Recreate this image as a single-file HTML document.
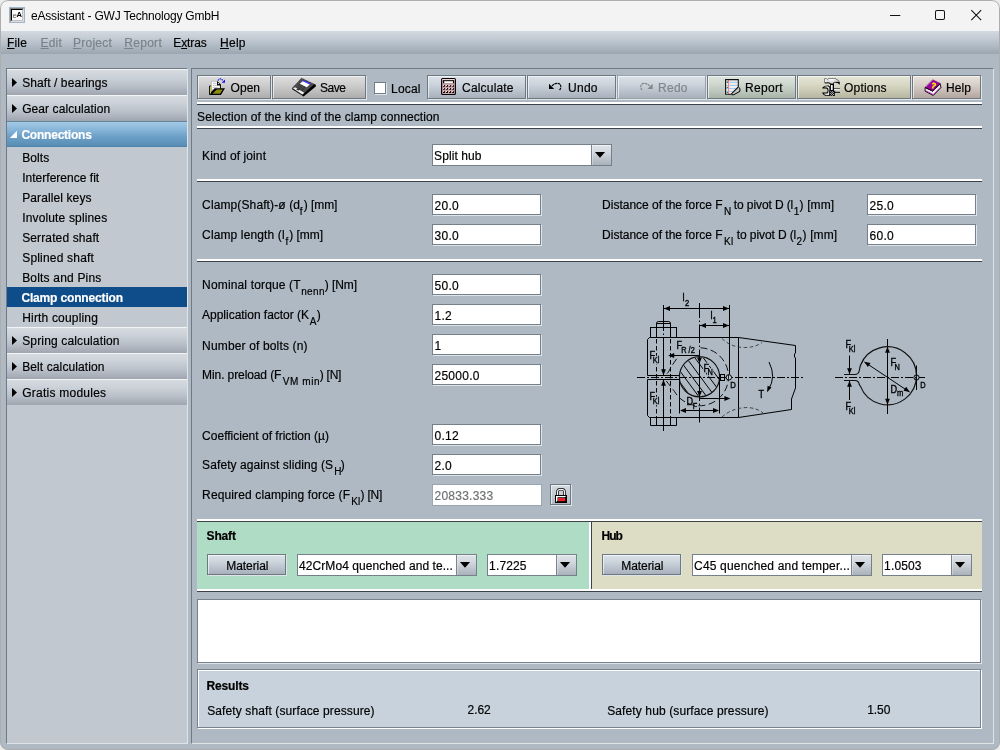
<!DOCTYPE html>
<html><head><meta charset="utf-8"><title>eAssistant - GWJ Technology GmbH</title>
<style>
html,body{margin:0;padding:0;background:#ececec;overflow:hidden;width:1000px;height:750px;}
#win{will-change:transform;position:relative;width:1000px;height:750px;overflow:hidden;background:#aeb9c4;border-radius:8px;font-family:"Liberation Sans", sans-serif;}
#frame{position:absolute;left:0;top:0;width:1000px;height:750px;box-sizing:border-box;border:1px solid #adadad;border-radius:8px;pointer-events:none;}
.t{position:absolute;white-space:pre;font-family:"Liberation Sans", sans-serif;-webkit-text-stroke:0.18px currentColor;}
u{text-decoration:underline;text-underline-offset:1px;}
</style></head><body><div id="win">
<div style="position:absolute;left:0px;top:0px;width:1000px;height:31px;background:#f3f3f3;"></div><div style="position:absolute;left:9px;top:7px;width:16px;height:16px;background:#dedede;border:1px solid #a4b3c5;box-sizing:border-box;"></div><div style="position:absolute;left:10px;top:8px;width:14px;height:14px;border-top:1px solid #7f7f7f;border-left:1px solid #7f7f7f;border-right:1px solid #dedede;border-bottom:1px solid #dedede;box-sizing:border-box;"></div><div style="position:absolute;left:11px;top:9px;width:12px;height:12px;background:#fff;border-top:1px solid #000;border-left:1px solid #000;border-right:1px solid #c0c0c0;border-bottom:1px solid #c0c0c0;box-sizing:border-box;"></div><span class="t" style="left:12.6px;top:10.6px;font-size:8px;line-height:9px;color:#555;-webkit-text-stroke:0">e</span><span class="t" style="left:16.4px;top:11.2px;font-size:7.6px;line-height:8px;font-weight:bold;color:#000;-webkit-text-stroke:0">A</span><span class="t" style="left:31.00px;top:9.00px;font-size:12px;line-height:14px;color:#000;letter-spacing:-0.197px;-webkit-text-stroke:0;">eAssistant - GWJ Technology GmbH</span><svg style="position:absolute;left:880px;top:0" width="120" height="31" viewBox="880 0 120 31"><g fill="none" stroke="#111" stroke-width="1.05"><path d="M890 15.5H900.3"/><rect x="935.5" y="10.5" width="9" height="9" rx="1.5"/><path d="M971.3 10.2L981.2 20.1M981.2 10.2L971.3 20.1"/></g></svg><div style="position:absolute;left:0px;top:31px;width:1000px;height:23px;background:linear-gradient(#d3d9e0 0%,#c4ccd5 30%,#b3bdc7 60%,#9ca6b1 100%);"></div><span class="t" style="left:7.05px;top:36.00px;font-size:12px;line-height:14px;color:#000;letter-spacing:0.152px;"><u>F</u>ile</span><span class="t" style="left:40.55px;top:36.00px;font-size:12px;line-height:14px;color:#7a828b;letter-spacing:0.171px;"><u>E</u>dit</span><span class="t" style="left:73.05px;top:36.00px;font-size:12px;line-height:14px;color:#7a828b;letter-spacing:0.223px;"><u>P</u>roject</span><span class="t" style="left:124.25px;top:36.00px;font-size:12px;line-height:14px;color:#7a828b;letter-spacing:0.294px;"><u>R</u>eport</span><span class="t" style="left:173.25px;top:36.00px;font-size:12px;line-height:14px;color:#000;letter-spacing:-0.103px;">E<u>x</u>tras</span><span class="t" style="left:220.05px;top:36.00px;font-size:12px;line-height:14px;color:#000;letter-spacing:0.271px;"><u>H</u>elp</span><div style="position:absolute;left:6px;top:68px;width:182px;height:676px;background:#c1c8d0;border-left:1px solid #707a84;border-top:1px solid #707a84;border-right:1px solid #dfe4e9;border-bottom:1px solid #dfe4e9;box-sizing:border-box;"></div><div style="position:absolute;left:7px;top:69px;width:180px;height:26px;background:linear-gradient(#d6dbe0 0%,#cbd1d8 30%,#b8bfc8 65%,#9fa6af 100%);border-top:1px solid #f2f4f6;box-sizing:border-box;"></div><svg style="position:absolute;left:11px;top:77px" width="7" height="11"><path d="M1 1L6 5.5L1 10Z" fill="#000"/></svg><span class="t" style="left:22.20px;top:76.00px;font-size:12px;line-height:14px;color:#000;letter-spacing:0.083px;">Shaft / bearings</span><div style="position:absolute;left:7px;top:95px;width:180px;height:26px;background:linear-gradient(#d6dbe0 0%,#cbd1d8 30%,#b8bfc8 65%,#9fa6af 100%);border-top:1px solid #f2f4f6;box-sizing:border-box;"></div><svg style="position:absolute;left:11px;top:103px" width="7" height="11"><path d="M1 1L6 5.5L1 10Z" fill="#000"/></svg><span class="t" style="left:22.20px;top:102.00px;font-size:12px;line-height:14px;color:#000;letter-spacing:0.079px;">Gear calculation</span><div style="position:absolute;left:7px;top:121px;width:180px;height:26px;background:linear-gradient(#a4cae6 0%,#88b6d9 30%,#6b9fc7 60%,#5a8fb6 92%,#4f82a9 100%);border-top:1px solid #64849a;box-sizing:border-box;"></div><svg style="position:absolute;left:9px;top:130px" width="9" height="9"><path d="M0.8 8L8 8L8 0.8Z" fill="#fff"/></svg><span class="t" style="left:21.40px;top:128.00px;font-size:12px;line-height:14px;color:#fff;font-weight:bold;letter-spacing:-0.217px;">Connections</span><span class="t" style="left:22.20px;top:151.00px;font-size:12px;line-height:14px;color:#000;letter-spacing:0.103px;">Bolts</span><span class="t" style="left:22.20px;top:171.00px;font-size:12px;line-height:14px;color:#000;letter-spacing:0.019px;">Interference fit</span><span class="t" style="left:22.20px;top:191.00px;font-size:12px;line-height:14px;color:#000;letter-spacing:0.106px;">Parallel keys</span><span class="t" style="left:22.20px;top:211.00px;font-size:12px;line-height:14px;color:#000;letter-spacing:0.152px;">Involute splines</span><span class="t" style="left:22.20px;top:231.00px;font-size:12px;line-height:14px;color:#000;letter-spacing:0.125px;">Serrated shaft</span><span class="t" style="left:22.20px;top:251.00px;font-size:12px;line-height:14px;color:#000;letter-spacing:0.192px;">Splined shaft</span><span class="t" style="left:22.20px;top:271.00px;font-size:12px;line-height:14px;color:#000;letter-spacing:0.183px;">Bolts and Pins</span><div style="position:absolute;left:7px;top:287px;width:180px;height:20px;background:#0f4c8a;"></div><span class="t" style="left:21.40px;top:291.00px;font-size:12px;line-height:14px;color:#fff;font-weight:bold;letter-spacing:-0.154px;">Clamp connection</span><span class="t" style="left:22.20px;top:311.00px;font-size:12px;line-height:14px;color:#000;letter-spacing:0.179px;">Hirth coupling</span><div style="position:absolute;left:7px;top:327px;width:180px;height:26px;background:linear-gradient(#d6dbe0 0%,#cbd1d8 30%,#b8bfc8 65%,#9fa6af 100%);border-top:1px solid #f2f4f6;box-sizing:border-box;"></div><svg style="position:absolute;left:11px;top:335px" width="7" height="11"><path d="M1 1L6 5.5L1 10Z" fill="#000"/></svg><span class="t" style="left:22.20px;top:334.00px;font-size:12px;line-height:14px;color:#000;letter-spacing:0.151px;">Spring calculation</span><div style="position:absolute;left:7px;top:353px;width:180px;height:26px;background:linear-gradient(#d6dbe0 0%,#cbd1d8 30%,#b8bfc8 65%,#9fa6af 100%);border-top:1px solid #f2f4f6;box-sizing:border-box;"></div><svg style="position:absolute;left:11px;top:361px" width="7" height="11"><path d="M1 1L6 5.5L1 10Z" fill="#000"/></svg><span class="t" style="left:22.20px;top:360.00px;font-size:12px;line-height:14px;color:#000;letter-spacing:0.105px;">Belt calculation</span><div style="position:absolute;left:7px;top:379px;width:180px;height:26px;background:linear-gradient(#d6dbe0 0%,#cbd1d8 30%,#b8bfc8 65%,#9fa6af 100%);border-top:1px solid #f2f4f6;box-sizing:border-box;"></div><svg style="position:absolute;left:11px;top:387px" width="7" height="11"><path d="M1 1L6 5.5L1 10Z" fill="#000"/></svg><span class="t" style="left:22.20px;top:386.00px;font-size:12px;line-height:14px;color:#000;letter-spacing:0.246px;">Gratis modules</span><div style="position:absolute;left:191px;top:68px;width:803px;height:676px;border-left:1px solid #707a84;border-top:1px solid #707a84;border-right:1px solid #dfe4e9;border-bottom:1px solid #dfe4e9;box-sizing:border-box;"></div><div style="position:absolute;left:197px;top:75px;width:74px;height:24px;background:linear-gradient(#dedede 0%,#d0d0d0 35%,#bdbdbd 70%,#adadad 100%);border:1px solid #6e7881;box-sizing:border-box;box-shadow:1px 1px 0 #dfe4e9, inset 1px 1px 0 rgba(255,255,255,0.6);"></div><div style="position:absolute;left:272px;top:75px;width:94px;height:24px;background:linear-gradient(#dedede 0%,#d0d0d0 35%,#bdbdbd 70%,#adadad 100%);border:1px solid #6e7881;box-sizing:border-box;box-shadow:1px 1px 0 #dfe4e9, inset 1px 1px 0 rgba(255,255,255,0.6);"></div><div style="position:absolute;left:427px;top:75px;width:99px;height:24px;background:linear-gradient(#dbe1e8 0%,#cdd5dd 35%,#b9c2cc 70%,#a7b0bb 100%);border:1px solid #6e7881;box-sizing:border-box;box-shadow:1px 1px 0 #dfe4e9, inset 1px 1px 0 rgba(255,255,255,0.6);"></div><div style="position:absolute;left:527px;top:75px;width:89px;height:24px;background:linear-gradient(#dbe1e8 0%,#cdd5dd 35%,#b9c2cc 70%,#a7b0bb 100%);border:1px solid #6e7881;box-sizing:border-box;box-shadow:1px 1px 0 #dfe4e9, inset 1px 1px 0 rgba(255,255,255,0.6);"></div><div style="position:absolute;left:617px;top:75px;width:89px;height:24px;background:linear-gradient(#dbe1e8 0%,#cdd5dd 35%,#b9c2cc 70%,#a7b0bb 100%);border:1px solid #98a2ac;box-sizing:border-box;box-shadow:1px 1px 0 #dfe4e9, inset 1px 1px 0 rgba(255,255,255,0.6);"></div><div style="position:absolute;left:707px;top:75px;width:89px;height:24px;background:linear-gradient(#dee4de 0%,#d0d8d0 35%,#bcc6bc 70%,#a9b4a9 100%);border:1px solid #6e7881;box-sizing:border-box;box-shadow:1px 1px 0 #dfe4e9, inset 1px 1px 0 rgba(255,255,255,0.6);"></div><div style="position:absolute;left:797px;top:75px;width:114px;height:24px;background:linear-gradient(#e6e6d8 0%,#dadac8 35%,#c8c8b2 70%,#b6b6a0 100%);border:1px solid #6e7881;box-sizing:border-box;box-shadow:1px 1px 0 #dfe4e9, inset 1px 1px 0 rgba(255,255,255,0.6);"></div><div style="position:absolute;left:912px;top:75px;width:69px;height:24px;background:linear-gradient(#e8e1dc 0%,#dad1cb 35%,#c6bbb4 70%,#b2a69f 100%);border:1px solid #6e7881;box-sizing:border-box;box-shadow:1px 1px 0 #dfe4e9, inset 1px 1px 0 rgba(255,255,255,0.6);"></div><span class="t" style="left:230.60px;top:81.00px;font-size:12px;line-height:14px;color:#000;letter-spacing:0.014px;">Open</span><span class="t" style="left:320.10px;top:81.00px;font-size:12px;line-height:14px;color:#000;letter-spacing:-0.486px;">Save</span><span class="t" style="left:391.10px;top:82.00px;font-size:12px;line-height:14px;color:#000;letter-spacing:0.178px;">Local</span><span class="t" style="left:462.10px;top:81.00px;font-size:12px;line-height:14px;color:#000;letter-spacing:0.171px;">Calculate</span><span class="t" style="left:568.10px;top:81.00px;font-size:12px;line-height:14px;color:#000;letter-spacing:0.237px;">Undo</span><span class="t" style="left:658.10px;top:81.00px;font-size:12px;line-height:14px;color:#80868d;letter-spacing:0.237px;">Redo</span><span class="t" style="left:745.10px;top:81.00px;font-size:12px;line-height:14px;color:#000;letter-spacing:0.274px;">Report</span><span class="t" style="left:844.10px;top:81.00px;font-size:12px;line-height:14px;color:#000;letter-spacing:0.173px;">Options</span><span class="t" style="left:946.10px;top:81.00px;font-size:12px;line-height:14px;color:#000;letter-spacing:0.071px;">Help</span><div style="position:absolute;left:374px;top:82px;width:12px;height:12px;background:#fff;border:1px solid #737d87;box-sizing:border-box;box-shadow:1px 1px 0 #dfe4e9;"></div><svg style="position:absolute;left:207px;top:77px" width="20" height="20" viewBox="207 77 20 20"><path d="M211.3 81.3H217.2L220.5 84.4V90H211.3Z" fill="#fff" stroke="#9a9a9a" stroke-width="0.6"/><path d="M212.8 83.3H216.5M212.8 85.4H217M212.8 87.4H218.5" stroke="#b0b0b0" stroke-width="0.8" fill="none"/><path d="M217 81L220.9 84.6V88.6H219.9V85.4H217Z" fill="#000"/><circle cx="218.4" cy="83.6" r="0.6" fill="#fff"/><path d="M209 86.2L209.8 85.4H211.1V92.2L214.6 88.2H225L220.9 94.9H209.7L209 94.2Z" fill="#000"/><path d="M209.9 86.3H211V93.3L209.9 94Z" fill="#c8c830"/><path d="M212.4 93.7L216.8 89.4H222.8L220 93.7Z" fill="#8c8c10"/><path d="M217.9 80.6Q219.2 78.7 220.6 78.9T223 80.8" stroke="#2020e8" stroke-width="1.1" fill="none" stroke-dasharray="1.6 0.6"/><path d="M225 79.4V82.7H221.7Z" fill="#1010f0"/></svg><svg style="position:absolute;left:290px;top:77px" width="27" height="20" viewBox="290 77 27 20"><path d="M301.5 78.2L315.4 84.8L303.2 95.4L292.2 88.2Z" fill="#4c4c4c" stroke="#2a1030" stroke-width="0.7" stroke-dasharray="1 0.6"/><path d="M314.2 84.2L315.8 85V86.4L303.6 96.6L302.4 95.8L302.6 94.4Z" fill="#000"/><path d="M292.2 88.2L303.2 95.4L303.4 96.3L292.1 89.2Z" fill="#000"/><path d="M303 80.9L310 84.3L306.8 87.3L299.8 83.8Z" fill="#fff"/><path d="M303.4 79.9L310.6 83.5L309.6 84.6L302.4 81Z" fill="#3838ff"/><path d="M293.2 88.5L295 87.2L304.2 92.8L302.6 94.4Z" fill="#f0f0f0"/><path d="M296.2 89.2L297.8 88.4L300 89.8L298.4 90.6Z" fill="#222"/><path d="M299.6 84.6L305.6 88.4M298.6 85.8L304.4 89.6M297.6 87L303 90.6" stroke="#1a1a1a" stroke-width="0.7" stroke-dasharray="1 0.8" fill="none"/></svg><svg style="position:absolute;left:440px;top:77px" width="18" height="19" viewBox="440 77 18 19"><rect x="441.6" y="78.5" width="13.8" height="16" rx="1" fill="#cda4aa" stroke="#000" stroke-width="1.1"/><rect x="442.2" y="79.1" width="12.6" height="1.1" fill="#f2d8dc"/><rect x="443" y="80.2" width="11" height="3" fill="#000"/><rect x="444.2" y="81.2" width="8.7" height="2" fill="#fff"/><path d="M443.95 85.0H444.85V86.8H443.05V85.9H443.95Z" fill="#000"/><rect x="443.05" y="85.0" width="0.9" height="0.9" fill="#f6e4e6"/><path d="M447.0 85.0H447.90000000000003V86.8H446.1V85.9H447.0Z" fill="#000"/><rect x="446.1" y="85.0" width="0.9" height="0.9" fill="#f6e4e6"/><path d="M450.04999999999995 85.0H450.95V86.8H449.15V85.9H450.04999999999995Z" fill="#000"/><rect x="449.15" y="85.0" width="0.9" height="0.9" fill="#f6e4e6"/><path d="M453.09999999999997 85.0H454.0V86.8H452.2V85.9H453.09999999999997Z" fill="#000"/><rect x="452.2" y="85.0" width="0.9" height="0.9" fill="#f6e4e6"/><path d="M443.95 88.05H444.85V89.85H443.05V88.95H443.95Z" fill="#000"/><rect x="443.05" y="88.05" width="0.9" height="0.9" fill="#f6e4e6"/><path d="M447.0 88.05H447.90000000000003V89.85H446.1V88.95H447.0Z" fill="#000"/><rect x="446.1" y="88.05" width="0.9" height="0.9" fill="#f6e4e6"/><path d="M450.04999999999995 88.05H450.95V89.85H449.15V88.95H450.04999999999995Z" fill="#000"/><rect x="449.15" y="88.05" width="0.9" height="0.9" fill="#f6e4e6"/><path d="M453.09999999999997 88.05H454.0V89.85H452.2V88.95H453.09999999999997Z" fill="#000"/><rect x="452.2" y="88.05" width="0.9" height="0.9" fill="#f6e4e6"/><path d="M443.95 91.1H444.85V92.89999999999999H443.05V92.0H443.95Z" fill="#000"/><rect x="443.05" y="91.1" width="0.9" height="0.9" fill="#f6e4e6"/><path d="M447.0 91.1H447.90000000000003V92.89999999999999H446.1V92.0H447.0Z" fill="#000"/><rect x="446.1" y="91.1" width="0.9" height="0.9" fill="#f6e4e6"/><path d="M450.04999999999995 91.1H450.95V92.89999999999999H449.15V92.0H450.04999999999995Z" fill="#000"/><rect x="449.15" y="91.1" width="0.9" height="0.9" fill="#f6e4e6"/><path d="M453.09999999999997 91.1H454.0V92.89999999999999H452.2V92.0H453.09999999999997Z" fill="#000"/><rect x="452.2" y="91.1" width="0.9" height="0.9" fill="#f6e4e6"/></svg><svg style="position:absolute;left:547px;top:81px" width="16" height="11" viewBox="547 81 16 11"><path d="M549 83.8V89H554.2Z" fill="#000"/><path d="M552 86Q554.2 83.4 557 83.4Q560.8 83.4 560.8 86.6Q560.8 88.8 559.5 90" stroke="#000" stroke-width="1.1" fill="none" stroke-dasharray="2.6 0.5"/></svg><svg style="position:absolute;left:638px;top:81px" width="16" height="11" viewBox="638 81 16 11"><path d="M652.6 83.8V89H647.4Z" fill="#858585"/><path d="M649.6 86Q647.4 83.4 644.6 83.4Q640.8 83.4 640.8 86.6Q640.8 88.8 642.1 90" stroke="#858585" stroke-width="1.1" fill="none" stroke-dasharray="2.6 0.5"/></svg><svg style="position:absolute;left:724px;top:78px" width="18" height="18" viewBox="724 78 18 18"><path d="M725.6 79.6H738.3V87L731 94.3H725.6Z" fill="#f3ecec"/><path d="M726.2 82.3H738M726.2 85.4H738M726.2 88.5H736.5M726.2 91.4H733.5" stroke="#8cc6f0" stroke-width="0.9" fill="none"/><path d="M728.5 80V94" stroke="#f08888" stroke-width="1" fill="none"/><path d="M738.6 87L739.6 88V91.3L733.8 94.5L731.4 94.2Z" fill="#c4c4c4"/><path d="M739 87.6L739.9 88.4V91.4L733.8 94.7H731.5" fill="none" stroke="#000" stroke-width="1"/><path d="M725.6 79.6H738.3V87L731 94.3H725.6Z" fill="none" stroke="#111" stroke-width="1.1"/><circle cx="727.3" cy="82.1" r="0.55"/><circle cx="727.3" cy="87.2" r="0.55"/><circle cx="727.3" cy="92.2" r="0.55"/></svg><svg style="position:absolute;left:821px;top:77px" width="21" height="20" viewBox="821 77 21 20"><rect x="833.6" y="88.4" width="6.4" height="4.4" fill="#000"/><rect x="833.6" y="88.9" width="6.4" height="2.8" fill="#e8e8e8"/><rect x="833.6" y="90.6" width="6.4" height="1.1" fill="#a8a8a8"/><path d="M822.4 87.6Q824 85.4 828.6 85.6L830.4 87V95.8H825.2Q822.8 94.8 822 92.6H826.6Q827.6 92.4 827.6 90.6Q827.6 88.6 826.4 88.4H822.4Z" fill="#000"/><path d="M823.6 87.2Q825.4 86.2 828.2 86.4L829.4 87.6V95H826Q824.6 94.4 823.8 93.4H827.4Q828.6 92.6 828.6 90.6Q828.6 88.2 827 87.6Z" fill="#e4e4e4"/><path d="M824.4 78.6H826.2L827.4 79.2L829 78.2H835Q838.6 79.6 839.8 82.2L839.6 84.8Q838 82.6 834.4 82.6L833.4 84.4H830.4Q829 82.6 826.6 83.4L824.6 83.2Z" fill="#000"/><path d="M824.8 78.8H826L827.4 79.6L829.2 78.6H834.8Q837.8 79.8 839.2 82Q836.6 81.6 834 82L833 83.4H830.8Q829 81.6 826.4 82.4L824.8 82.2Z" fill="#dcdcdc"/><path d="M825.2 79.2H826.2V81.8H825.2ZM829.6 79H834.6L834 80.4H829.2Z" fill="#fff"/><rect x="830.2" y="84" width="3.8" height="12" fill="#000"/><rect x="831" y="85" width="1.7" height="5.2" fill="#f4f4f4"/><path d="M829.4 91L830.4 90.2H833.8L834.8 91.2V96H829.4Z" fill="#000"/><path d="M830.3 91.3h.9v.9h-.9zM832.1 91.3h.9v.9h-.9zM831.2 92.2h.9v.9h-.9zM833 92.2h.9v.9h-.9zM830.3 93.1h.9v.9h-.9zM832.1 93.1h.9v.9h-.9zM831.2 94h.9v.9h-.9zM833 94h.9v.9h-.9zM830.3 94.9h.9v.9h-.9zM832.1 94.9h.9v.9h-.9z" fill="#d0d0d0"/></svg><svg style="position:absolute;left:923px;top:78px" width="20" height="19" viewBox="923 78 20 19"><path d="M925.1 87.6L932.7 91.2L940.2 84L941 87.6L933.3 95.5L925.1 91.2Z" fill="#f0f0f0" stroke="#000" stroke-width="0.9"/><path d="M925.4 90.6L933.2 94.6L940.8 87" stroke="#a000a0" stroke-width="0.8" fill="none"/><path d="M932.7 79.8L940.1 83.4L932.7 91L925.1 87.4Z" fill="#9a009a" stroke="#7a007a" stroke-width="0.6"/><path d="M925.1 87.4L932.7 91L940.1 83.4" stroke="#000" stroke-width="0.9" fill="none" stroke-dasharray="1.4 0.4"/><path d="M926.4 86.4L932.6 80.6" stroke="#d8b0d8" stroke-width="0.7" stroke-dasharray="0.7 0.6" fill="none"/><text x="931.2" y="88.6" font-family="Liberation Sans, sans-serif" font-weight="bold" font-size="8" fill="#f8f800" stroke="#f8f800" stroke-width="0.4" transform="rotate(18 934 86)">?</text></svg><div style="position:absolute;left:197px;top:102px;width:785px;height:2px;background:#fff;"></div><div style="position:absolute;left:197px;top:104px;width:785px;height:1px;background:#3c4247;"></div><span class="t" style="left:197.10px;top:110.00px;font-size:12px;line-height:14px;color:#000;letter-spacing:0.096px;">Selection of the kind of the clamp connection</span><div style="position:absolute;left:197px;top:126px;width:785px;height:2px;background:#fff;"></div><div style="position:absolute;left:197px;top:128px;width:785px;height:1px;background:#3c4247;"></div><span class="t" style="left:202.10px;top:149.00px;font-size:12px;line-height:14px;color:#000;letter-spacing:0.098px;">Kind of joint</span><div style="position:absolute;left:432px;top:144px;width:180px;height:22px;background:#fff;border:1px solid #76808a;box-sizing:border-box;"></div><div style="position:absolute;left:591px;top:145px;width:20px;height:20px;background:linear-gradient(#dfe4e9 0%,#d0d6dc 40%,#b9c0c8 75%,#a9b1ba 100%);border-left:1px solid #7a848e;box-sizing:border-box;box-shadow:inset 0 1px 0 rgba(255,255,255,.5),inset 1px 0 0 rgba(255,255,255,.3);"></div><svg style="position:absolute;left:594px;top:151px" width="12" height="8"><path d="M0.9 1L11.1 1L6 6.7Z" fill="#000"/></svg><span class="t" style="left:434.10px;top:149.00px;font-size:12px;line-height:14px;color:#000;letter-spacing:0.087px;">Split hub</span><div style="position:absolute;left:197px;top:179px;width:785px;height:2px;background:#fff;"></div><div style="position:absolute;left:197px;top:181px;width:785px;height:1px;background:#3c4247;"></div><span class="t" style="left:202.10px;top:198.00px;font-size:12px;line-height:14px;color:#000;letter-spacing:0.117px;">Clamp(Shaft)-ø (d</span><span class="t" style="left:299.80px;top:206.00px;font-size:10px;line-height:11px;color:#000;letter-spacing:0.719px;">f</span><span class="t" style="left:303.80px;top:198.00px;font-size:12px;line-height:14px;color:#000;letter-spacing:-0.080px;">) [mm]</span><div style="position:absolute;left:432px;top:194px;width:109px;height:21px;background:#fff;border:1px solid #76808a;box-sizing:border-box;box-shadow:1px 1px 0 #dfe4e9;"></div><span class="t" style="left:434.50px;top:199.00px;font-size:12px;line-height:14px;color:#000;letter-spacing:0.273px;">20.0</span><span class="t" style="left:202.10px;top:228.00px;font-size:12px;line-height:14px;color:#000;letter-spacing:0.128px;">Clamp length (l</span><span class="t" style="left:285.40px;top:236.00px;font-size:10px;line-height:11px;color:#000;letter-spacing:0.719px;">f</span><span class="t" style="left:289.20px;top:228.00px;font-size:12px;line-height:14px;color:#000;letter-spacing:-0.040px;">) [mm]</span><div style="position:absolute;left:432px;top:224px;width:109px;height:21px;background:#fff;border:1px solid #76808a;box-sizing:border-box;box-shadow:1px 1px 0 #dfe4e9;"></div><span class="t" style="left:434.50px;top:229.00px;font-size:12px;line-height:14px;color:#000;letter-spacing:0.273px;">30.0</span><span class="t" style="left:602.10px;top:198.00px;font-size:12px;line-height:14px;color:#000;letter-spacing:-0.011px;">Distance of the force F</span><span class="t" style="left:724.10px;top:206.00px;font-size:10px;line-height:11px;color:#000;letter-spacing:-0.834px;">N</span><span class="t" style="left:730.60px;top:198.00px;font-size:12px;line-height:14px;color:#000;letter-spacing:-0.102px;"> to pivot D (l</span><span class="t" style="left:793.80px;top:206.00px;font-size:10px;line-height:11px;color:#000;letter-spacing:-0.263px;">1</span><span class="t" style="left:799.60px;top:198.00px;font-size:12px;line-height:14px;color:#000;letter-spacing:0.120px;">) [mm]</span><div style="position:absolute;left:867px;top:194px;width:109px;height:21px;background:#fff;border:1px solid #76808a;box-sizing:border-box;box-shadow:1px 1px 0 #dfe4e9;"></div><span class="t" style="left:869.50px;top:199.00px;font-size:12px;line-height:14px;color:#000;letter-spacing:0.273px;">25.0</span><span class="t" style="left:602.10px;top:228.00px;font-size:12px;line-height:14px;color:#000;letter-spacing:-0.011px;">Distance of the force F</span><span class="t" style="left:724.10px;top:236.00px;font-size:10px;line-height:11px;color:#000;letter-spacing:0.294px;">Kl</span><span class="t" style="left:733.60px;top:228.00px;font-size:12px;line-height:14px;color:#000;letter-spacing:-0.102px;"> to pivot D (l</span><span class="t" style="left:796.60px;top:236.00px;font-size:10px;line-height:11px;color:#000;letter-spacing:0.137px;">2</span><span class="t" style="left:802.60px;top:228.00px;font-size:12px;line-height:14px;color:#000;letter-spacing:0.120px;">) [mm]</span><div style="position:absolute;left:867px;top:224px;width:109px;height:21px;background:#fff;border:1px solid #76808a;box-sizing:border-box;box-shadow:1px 1px 0 #dfe4e9;"></div><span class="t" style="left:869.50px;top:229.00px;font-size:12px;line-height:14px;color:#000;letter-spacing:0.273px;">60.0</span><div style="position:absolute;left:197px;top:259px;width:785px;height:2px;background:#fff;"></div><div style="position:absolute;left:197px;top:261px;width:785px;height:1px;background:#3c4247;"></div><span class="t" style="left:202.10px;top:278.00px;font-size:12px;line-height:14px;color:#000;letter-spacing:0.153px;">Nominal torque (T</span><span class="t" style="left:301.20px;top:286.00px;font-size:10px;line-height:11px;color:#000;letter-spacing:0.350px;">nenn</span><span class="t" style="left:324.80px;top:278.00px;font-size:12px;line-height:14px;color:#000;letter-spacing:-0.094px;">) [Nm]</span><div style="position:absolute;left:432px;top:274px;width:109px;height:21px;background:#fff;border:1px solid #76808a;box-sizing:border-box;box-shadow:1px 1px 0 #dfe4e9;"></div><span class="t" style="left:434.50px;top:279.00px;font-size:12px;line-height:14px;color:#000;letter-spacing:0.273px;">50.0</span><span class="t" style="left:202.10px;top:308.00px;font-size:12px;line-height:14px;color:#000;letter-spacing:-0.025px;">Application factor (K</span><span class="t" style="left:309.80px;top:316.00px;font-size:10px;line-height:11px;color:#000;letter-spacing:0.228px;">A</span><span class="t" style="left:316.80px;top:308.00px;font-size:12px;line-height:14px;color:#000;letter-spacing:-0.400px;">)</span><div style="position:absolute;left:432px;top:304px;width:109px;height:21px;background:#fff;border:1px solid #76808a;box-sizing:border-box;box-shadow:1px 1px 0 #dfe4e9;"></div><span class="t" style="left:434.50px;top:309.00px;font-size:12px;line-height:14px;color:#000;letter-spacing:0.292px;">1.2</span><span class="t" style="left:202.10px;top:339.00px;font-size:12px;line-height:14px;color:#000;letter-spacing:0.150px;">Number of bolts (n)</span><div style="position:absolute;left:432px;top:334px;width:109px;height:21px;background:#fff;border:1px solid #76808a;box-sizing:border-box;box-shadow:1px 1px 0 #dfe4e9;"></div><span class="t" style="left:434.50px;top:339.00px;font-size:12px;line-height:14px;color:#000;letter-spacing:0.234px;">1</span><span class="t" style="left:202.10px;top:368.00px;font-size:12px;line-height:14px;color:#000;letter-spacing:-0.100px;">Min. preload (F</span><span class="t" style="left:282.80px;top:376.00px;font-size:10px;line-height:11px;color:#000;letter-spacing:0.559px;">VM min</span><span class="t" style="left:319.80px;top:368.00px;font-size:12px;line-height:14px;color:#000;letter-spacing:-0.268px;">) [N]</span><div style="position:absolute;left:432px;top:364px;width:109px;height:21px;background:#fff;border:1px solid #76808a;box-sizing:border-box;box-shadow:1px 1px 0 #dfe4e9;"></div><span class="t" style="left:434.50px;top:369.00px;font-size:12px;line-height:14px;color:#000;letter-spacing:0.253px;">25000.0</span><span class="t" style="left:202.10px;top:429.00px;font-size:12px;line-height:14px;color:#000;letter-spacing:0.006px;">Coefficient of friction (µ)</span><div style="position:absolute;left:432px;top:424px;width:109px;height:21px;background:#fff;border:1px solid #76808a;box-sizing:border-box;box-shadow:1px 1px 0 #dfe4e9;"></div><span class="t" style="left:434.50px;top:429.00px;font-size:12px;line-height:14px;color:#000;letter-spacing:0.273px;">0.12</span><span class="t" style="left:202.10px;top:458.00px;font-size:12px;line-height:14px;color:#000;letter-spacing:0.090px;">Safety against sliding (S</span><span class="t" style="left:334.20px;top:466.00px;font-size:10px;line-height:11px;color:#000;letter-spacing:-0.734px;">H</span><span class="t" style="left:340.80px;top:458.00px;font-size:12px;line-height:14px;color:#000;letter-spacing:-0.400px;">)</span><div style="position:absolute;left:432px;top:454px;width:109px;height:21px;background:#fff;border:1px solid #76808a;box-sizing:border-box;box-shadow:1px 1px 0 #dfe4e9;"></div><span class="t" style="left:434.50px;top:459.00px;font-size:12px;line-height:14px;color:#000;letter-spacing:0.292px;">2.0</span><span class="t" style="left:202.10px;top:488.00px;font-size:12px;line-height:14px;color:#000;letter-spacing:0.127px;">Required clamping force (F</span><span class="t" style="left:351.20px;top:496.00px;font-size:10px;line-height:11px;color:#000;letter-spacing:0.194px;">Kl</span><span class="t" style="left:360.60px;top:488.00px;font-size:12px;line-height:14px;color:#000;letter-spacing:-0.218px;">) [N]</span><div style="position:absolute;left:432px;top:484px;width:110px;height:22px;background:#fff;border:1px solid #9aa5b0;box-sizing:border-box;"></div><span class="t" style="left:434.50px;top:489.00px;font-size:12px;line-height:14px;color:#6f7275;letter-spacing:0.248px;">20833.333</span><div style="position:absolute;left:550px;top:484px;width:21px;height:21px;background:linear-gradient(#d6dce2 0%,#c5ccd4 40%,#b0b8c1 100%);border:1px solid #6e7881;box-sizing:border-box;box-shadow:1px 1px 0 #dfe4e9, inset 1px 1px 0 rgba(255,255,255,0.6);"></div><svg style="position:absolute;left:554px;top:487px" width="14" height="17" viewBox="554 487 14 17"><path d="M557.5 495.5L557.5 491.4Q557.5 489.3 561 489.3Q564.5 489.3 564.5 491.4L564.5 495.5" fill="none" stroke="#000" stroke-width="2.5"/><path d="M557.5 495.5L557.5 491.4Q557.5 489.4 561 489.4Q564.5 489.4 564.5 491.4L564.5 495.5" fill="none" stroke="#f4f4f4" stroke-width="1.1"/><rect x="555" y="495" width="12" height="8" fill="#000"/><path d="M556 502V496H566L565 497.3H557.5V500.8Z" fill="#fff"/><rect x="558" y="498" width="7.2" height="3.2" fill="#e8202a"/></svg><svg style="position:absolute;left:630px;top:285px" width="320" height="160" viewBox="630 285 320 160" font-family="Liberation Sans, sans-serif"><defs><clipPath id="sc"><circle cx="699.5" cy="376.8" r="19.6"/></clipPath></defs><g fill="none" stroke="#000" stroke-width="1"><path d="M637 377.5H803" stroke-dasharray="8 2 2 2" stroke-dashoffset="0"/><path d="M663.5 305V331M663.5 333.5V335M663.5 337.5V375M663.5 380V431"/><path d="M699.5 303V318M699.5 320.5V322M699.5 324.5V343M699.5 345.5V347M699.5 349.5V401M699.5 403.5V405M699.5 407.5V422.5"/><path d="M729.5 305V374.5"/><path d="M663.5 308.5H729.5M699.5 325.5H729.5"/><rect x="650.5" y="327.5" width="26" height="10"/><path d="M656.5 337.5V323.5Q656.5 321.5 658.5 321.5H668.5Q670.5 321.5 670.5 323.5V337.5M656.5 323.5H670.5"/><path d="M647.5 375.5V339.5L649.5 337.5H738.5V417.5H649.5L647.5 415.5V379.5"/><path d="M647.5 375.5H679.5M647.5 379.5H679.5" /><path d="M650.5 417.5V425.5H676.5V417.5M656.5 417.5V425.5M670.5 417.5V425.5"/><path d="M656.5 339V417M670.5 339V417" stroke-dasharray="4.5 2.5"/><path d="M738.5 337.5L795.5 345.5V353L794.5 354V357L795.5 358V388L791.5 399V409.5L738.5 417.5"/><circle cx="699.5" cy="376.8" r="20.1" stroke="#111" stroke-width="1.15"/><path d="M645.7 346.8L689.9 406.8M653.9 346.8L698.1 406.8M662.1 346.8L706.3 406.8M670.0 346.8L714.2 406.8M678.3 346.8L722.5 406.8M686.8 346.8L731.0 406.8M695.2 346.8L739.4 406.8M703.4 346.8L747.6 406.8" clip-path="url(#sc)"/><path d="M699.5 355.5H672M699.5 398.5H726"/><path d="M679.5 378V413.5M719.5 378V413.5M682 410.5H717"/><rect x="720.5" y="374.5" width="4" height="6"/><circle cx="728.8" cy="377.4" r="2.7" fill="#c9d1d9"/><path d="M700.5 347.8A29 29 0 1 1 674.4 391.3Q669.5 385 665.5 380" stroke-dasharray="7 3.5" stroke="#111" stroke-width="1"/><path d="M676.6 358.9Q671.5 366 669.5 370T665.5 374.5" stroke-dasharray="7 3.5" stroke="#111" stroke-width="1"/><path d="M722 338.5Q731 347.5 745 347.5Q755 347.5 762 342.5M722 417Q732 408 747 407.5Q757 408 763 413" stroke="#2e3338" stroke-width="0.9" stroke-dasharray="3.5 2.5"/><path d="M769 362Q776.5 377 768.5 389.5"/></g><path d="M664.0 308.5L670.0 306.1L670.0 310.9ZM729.0 308.5L723.0 310.9L723.0 306.1ZM700.0 325.5L706.0 323.1L706.0 327.9ZM729.0 325.5L723.0 327.9L723.0 323.1ZM668.2 355.5L674.2 353.1L674.2 357.9ZM730.4 398.5L724.4 400.9L724.4 396.1ZM663.5 375.3L661.1 369.3L665.9 369.3ZM663.5 379.7L665.9 385.7L661.1 385.7ZM699.5 363.5L697.1 357.5L701.9 357.5ZM699.5 397.0L697.1 391.0L701.9 391.0ZM680.0 410.5L686.0 408.1L686.0 412.9ZM719.0 410.5L713.0 412.9L713.0 408.1ZM767.0 392.2L767.6 385.7L771.5 387.4Z" fill="#000"/><text transform="translate(682.6,301.3) scale(0.9,1)" font-size="10.2" fill="#000" stroke="#000" stroke-width="0.35">l</text><text transform="translate(685,305.8) scale(0.9,1)" font-size="8.4" fill="#000" stroke="#000" stroke-width="0.35">2</text><text transform="translate(710.6,319.2) scale(0.9,1)" font-size="10.2" fill="#000" stroke="#000" stroke-width="0.35">l</text><text transform="translate(712.6,322.8) scale(0.9,1)" font-size="8.4" fill="#000" stroke="#000" stroke-width="0.35">1</text><text transform="translate(676.6,349.2) scale(0.9,1)" font-size="10.2" fill="#000" stroke="#000" stroke-width="0.35">F</text><text transform="translate(681.2,353) scale(0.9,1)" font-size="8.2" fill="#000" stroke="#000" stroke-width="0.35">R /2</text><text transform="translate(652.8,363) scale(0.9,1)" font-size="8.2" fill="#aeb9c4" stroke="#aeb9c4" stroke-width="2.4">Kl</text><text transform="translate(649.6,359.2) scale(0.9,1)" font-size="10.2" fill="#000" stroke="#000" stroke-width="0.35">F</text><text transform="translate(652.8,363) scale(0.9,1)" font-size="8.2" fill="#000" stroke="#000" stroke-width="0.35">Kl</text><text transform="translate(703.4,371.6) scale(0.9,1)" font-size="10.2" fill="#aeb9c4" stroke="#aeb9c4" stroke-width="2.4">F</text><text transform="translate(707.6,375) scale(0.9,1)" font-size="8.2" fill="#aeb9c4" stroke="#aeb9c4" stroke-width="2.4">N</text><text transform="translate(703.4,371.6) scale(0.9,1)" font-size="10.2" fill="#000" stroke="#000" stroke-width="0.35">F</text><text transform="translate(707.6,375) scale(0.9,1)" font-size="8.2" fill="#000" stroke="#000" stroke-width="0.35">N</text><text transform="translate(652.8,404) scale(0.9,1)" font-size="8.2" fill="#aeb9c4" stroke="#aeb9c4" stroke-width="2.4">Kl</text><text transform="translate(649.6,400.2) scale(0.9,1)" font-size="10.2" fill="#000" stroke="#000" stroke-width="0.35">F</text><text transform="translate(652.8,404) scale(0.9,1)" font-size="8.2" fill="#000" stroke="#000" stroke-width="0.35">Kl</text><text transform="translate(686.4,405.2) scale(0.9,1)" font-size="10.2" fill="#000" stroke="#000" stroke-width="0.35">D</text><text transform="translate(692.8,409.2) scale(0.9,1)" font-size="8.2" fill="#000" stroke="#000" stroke-width="0.35">F</text><text transform="translate(730.2,387.9) scale(0.9,1)" font-size="8.6" fill="#000" stroke="#000" stroke-width="0.35">D</text><text transform="translate(758.6,397.6) scale(0.9,1)" font-size="10.2" fill="#000" stroke="#000" stroke-width="0.35">T</text><g fill="none" stroke="#000" stroke-width="1"><path d="M835 377.5H925" stroke-dasharray="8 2 2 2"/><path d="M887.5 339V414"/><path d="M916.5 365.5V390"/><path d="M844 374.5H855Q858.6 374.5 859.3 370.5Q859.8 367.2 860.5 365.2A29 29 0 1 1 860.5 386.4Q859.8 385.6 859.3 384.5Q858.6 380.5 855 380.5H844" stroke="#111" stroke-width="1.15"/><circle cx="916.5" cy="377.5" r="2.6"/><path d="M849.5 355.5V374M849.5 381V400"/><path d="M864.5 362L909.5 392"/></g><path d="M849.5 374.3L847.1 368.3L851.9 368.3ZM849.5 380.7L851.9 386.7L847.1 386.7ZM887.5 346.8L889.9 352.8L885.1 352.8ZM887.5 404.8L885.1 398.8L889.9 398.8ZM864.2 361.7L870.5 363.0L867.9 367.0ZM909.8 392.1L903.5 390.8L906.1 386.8Z" fill="#000"/><text transform="translate(845.4,348.2) scale(0.9,1)" font-size="10.2" fill="#000" stroke="#000" stroke-width="0.35">F</text><text transform="translate(848.8,352) scale(0.9,1)" font-size="8.2" fill="#000" stroke="#000" stroke-width="0.35">Kl</text><text transform="translate(890.6,366.2) scale(0.9,1)" font-size="10.2" fill="#000" stroke="#000" stroke-width="0.35">F</text><text transform="translate(894.6,370.2) scale(0.9,1)" font-size="8.2" fill="#000" stroke="#000" stroke-width="0.35">N</text><text transform="translate(890.4,392.6) scale(0.9,1)" font-size="10.2" fill="#000" stroke="#000" stroke-width="0.35">D</text><text transform="translate(897,396) scale(0.9,1)" font-size="8.4" fill="#000" stroke="#000" stroke-width="0.35">m</text><text transform="translate(920.2,387.6) scale(0.9,1)" font-size="8.2" fill="#000" stroke="#000" stroke-width="0.35">D</text><text transform="translate(845.4,410.4) scale(0.9,1)" font-size="10.2" fill="#000" stroke="#000" stroke-width="0.35">F</text><text transform="translate(848.8,414.2) scale(0.9,1)" font-size="8.2" fill="#000" stroke="#000" stroke-width="0.35">Kl</text></svg><div style="position:absolute;left:197px;top:519px;width:785px;height:2px;background:#fff;"></div><div style="position:absolute;left:197px;top:521px;width:785px;height:1px;background:#3c4247;"></div><div style="position:absolute;left:197px;top:522px;width:392px;height:67px;background:#aedcc4;"></div><div style="position:absolute;left:592px;top:522px;width:390px;height:67px;background:#dddcc4;"></div><div style="position:absolute;left:589px;top:522px;width:2px;height:67px;background:#fff;"></div><div style="position:absolute;left:591px;top:522px;width:1px;height:67px;background:#3c4247;"></div><div style="position:absolute;left:197px;top:589px;width:785px;height:2px;background:#fff;"></div><div style="position:absolute;left:197px;top:591px;width:785px;height:1px;background:#3c4247;"></div><span class="t" style="left:206.60px;top:529.00px;font-size:12px;line-height:14px;color:#000;font-weight:bold;letter-spacing:-0.175px;">Shaft</span><span class="t" style="left:601.40px;top:529.00px;font-size:12px;line-height:14px;color:#000;font-weight:bold;letter-spacing:-0.914px;">Hub</span><div style="position:absolute;left:207px;top:554px;width:79px;height:21px;background:linear-gradient(#dbe1e8 0%,#cdd5dd 35%,#b9c2cc 70%,#a7b0bb 100%);border:1px solid #6e7881;box-sizing:border-box;box-shadow:1px 1px 0 #dfe4e9, inset 1px 1px 0 rgba(255,255,255,0.6);"></div><span class="t" style="left:226.20px;top:559.00px;font-size:12px;line-height:14px;color:#000;letter-spacing:-0.055px;">Material</span><div style="position:absolute;left:602px;top:554px;width:79px;height:21px;background:linear-gradient(#dbe1e8 0%,#cdd5dd 35%,#b9c2cc 70%,#a7b0bb 100%);border:1px solid #6e7881;box-sizing:border-box;box-shadow:1px 1px 0 #dfe4e9, inset 1px 1px 0 rgba(255,255,255,0.6);"></div><span class="t" style="left:621.20px;top:559.00px;font-size:12px;line-height:14px;color:#000;letter-spacing:-0.055px;">Material</span><div style="position:absolute;left:297px;top:554px;width:180px;height:22px;background:#fff;border:1px solid #76808a;box-sizing:border-box;"></div><div style="position:absolute;left:456px;top:555px;width:20px;height:20px;background:linear-gradient(#dfe4e9 0%,#d0d6dc 40%,#b9c0c8 75%,#a9b1ba 100%);border-left:1px solid #7a848e;box-sizing:border-box;box-shadow:inset 0 1px 0 rgba(255,255,255,.5),inset 1px 0 0 rgba(255,255,255,.3);"></div><svg style="position:absolute;left:459px;top:561px" width="12" height="8"><path d="M0.9 1L11.1 1L6 6.7Z" fill="#000"/></svg><span class="t" style="left:299.10px;top:559.00px;font-size:12px;line-height:14px;color:#000;letter-spacing:0.064px;">42CrMo4 quenched and te...</span><div style="position:absolute;left:487px;top:554px;width:90px;height:22px;background:#fff;border:1px solid #76808a;box-sizing:border-box;"></div><div style="position:absolute;left:556px;top:555px;width:20px;height:20px;background:linear-gradient(#dfe4e9 0%,#d0d6dc 40%,#b9c0c8 75%,#a9b1ba 100%);border-left:1px solid #7a848e;box-sizing:border-box;box-shadow:inset 0 1px 0 rgba(255,255,255,.5),inset 1px 0 0 rgba(255,255,255,.3);"></div><svg style="position:absolute;left:559px;top:561px" width="12" height="8"><path d="M0.9 1L11.1 1L6 6.7Z" fill="#000"/></svg><span class="t" style="left:489.10px;top:559.00px;font-size:12px;line-height:14px;color:#000;letter-spacing:0.139px;">1.7225</span><div style="position:absolute;left:692px;top:554px;width:180px;height:22px;background:#fff;border:1px solid #76808a;box-sizing:border-box;"></div><div style="position:absolute;left:851px;top:555px;width:20px;height:20px;background:linear-gradient(#dfe4e9 0%,#d0d6dc 40%,#b9c0c8 75%,#a9b1ba 100%);border-left:1px solid #7a848e;box-sizing:border-box;box-shadow:inset 0 1px 0 rgba(255,255,255,.5),inset 1px 0 0 rgba(255,255,255,.3);"></div><svg style="position:absolute;left:854px;top:561px" width="12" height="8"><path d="M0.9 1L11.1 1L6 6.7Z" fill="#000"/></svg><span class="t" style="left:694.10px;top:559.00px;font-size:12px;line-height:14px;color:#000;letter-spacing:0.170px;">C45 quenched and temper...</span><div style="position:absolute;left:882px;top:554px;width:90px;height:22px;background:#fff;border:1px solid #76808a;box-sizing:border-box;"></div><div style="position:absolute;left:951px;top:555px;width:20px;height:20px;background:linear-gradient(#dfe4e9 0%,#d0d6dc 40%,#b9c0c8 75%,#a9b1ba 100%);border-left:1px solid #7a848e;box-sizing:border-box;box-shadow:inset 0 1px 0 rgba(255,255,255,.5),inset 1px 0 0 rgba(255,255,255,.3);"></div><svg style="position:absolute;left:954px;top:561px" width="12" height="8"><path d="M0.9 1L11.1 1L6 6.7Z" fill="#000"/></svg><span class="t" style="left:884.10px;top:559.00px;font-size:12px;line-height:14px;color:#000;letter-spacing:0.139px;">1.0503</span><div style="position:absolute;left:197px;top:599px;width:784px;height:64px;background:#fff;border:1px solid #78828c;box-sizing:border-box;box-shadow:1px 1px 0 #dfe4e9;"></div><div style="position:absolute;left:197px;top:669px;width:784px;height:59px;background:#c8d2dc;border:1px solid #78828c;box-sizing:border-box;box-shadow:1px 1px 0 #fff, inset 1px 1px 0 #fff;"></div><span class="t" style="left:206.60px;top:679.00px;font-size:12px;line-height:14px;color:#000;font-weight:bold;letter-spacing:-0.177px;">Results</span><span class="t" style="left:207.20px;top:704.00px;font-size:12px;line-height:14px;color:#000;letter-spacing:0.111px;">Safety shaft (surface pressure)</span><span class="t" style="left:467.60px;top:703.00px;font-size:12px;line-height:14px;color:#000;letter-spacing:-0.053px;">2.62</span><span class="t" style="left:607.20px;top:704.00px;font-size:12px;line-height:14px;color:#000;letter-spacing:0.119px;">Safety hub (surface pressure)</span><span class="t" style="left:867.20px;top:703.00px;font-size:12px;line-height:14px;color:#000;letter-spacing:-0.053px;">1.50</span>
<div id="frame"></div>
</div></body></html>
